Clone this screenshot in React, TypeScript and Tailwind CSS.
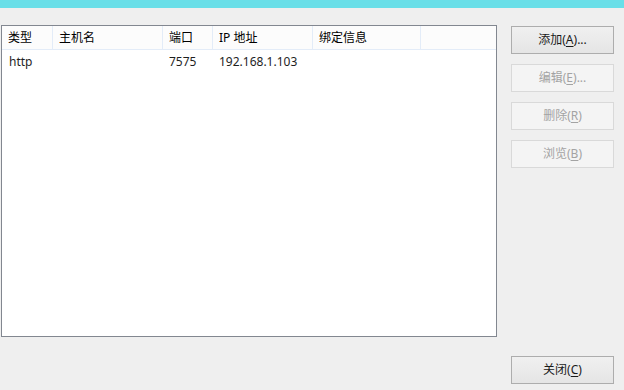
import React from 'react';

type Binding = {
    type: string;
    host: string;
    port: string;
    ip: string;
    info: string;
};

const columns = [
    { title: "类型", width: "w-[51px]" },
    { title: "主机名", width: "w-[110px]" },
    { title: "端口", width: "w-[50px]" },
    { title: "IP 地址", width: "w-[100px]" },
    { title: "绑定信息", width: "w-[108px]" },
];

const bindings: Binding[] = [
    { type: "http", host: "", port: "7575", ip: "192.168.1.103", info: "" },
];

const Button = ({ label, hotkey, suffix = "", disabled = false }: { label: string; hotkey: string; suffix?: string; disabled?: boolean }) => (
    <button
        disabled={disabled}
        className={
            disabled
                ? "w-[103px] h-[28px] border border-[#d9d9d9] bg-[#f4f4f4] text-[#a3a3a3] text-[12px] flex items-center justify-center"
                : "w-[103px] h-[28px] border border-[#adadad] bg-gradient-to-b from-[#f0f0f0] to-[#e5e5e5] text-[#1a1a1a] text-[12px] flex items-center justify-center"
        }
    >
        {label}(<span className="underline underline-offset-2">{hotkey}</span>){suffix}
    </button>
);

const App = () => {
    return (
        <div className="w-[624px] h-[390px] bg-[#efefef] flex flex-col font-['Noto_Sans','Noto_Sans_CJK_SC',sans-serif] text-[12px] text-black overflow-hidden">
            {/* title strip */}
            <div className="h-[8px] bg-[#69dfe8] shrink-0"></div>

            <div className="flex pt-[17px] pl-[1px]">
                {/* list view */}
                <div className="w-[496px] h-[312px] border border-[#828790] bg-white flex flex-col">
                    <div className="flex h-[24px] bg-[#fcfcfc] border-b border-[#e3ecf8]">
                        {columns.map((col, i) => (
                            <div key={i} className={`${col.width} h-full border-r border-[#e3ecf8] pl-[6px] flex items-center`}>
                                {col.title}
                            </div>
                        ))}
                    </div>
                    {bindings.map((b, i) => (
                        <div key={i} className="flex h-[24px] items-center text-[#1e1e1e]">
                            <div className="w-[51px] pl-[7px]">{b.type}</div>
                            <div className="w-[110px] pl-[6px]">{b.host}</div>
                            <div className="w-[50px] pl-[6px]">{b.port}</div>
                            <div className="w-[100px] pl-[6px]">{b.ip}</div>
                            <div className="w-[108px] pl-[6px]">{b.info}</div>
                        </div>
                    ))}
                </div>

                {/* side buttons */}
                <div className="ml-[14px] pt-[1px] flex flex-col gap-[10px]">
                    <Button label="添加" hotkey="A" suffix="..." />
                    <Button label="编辑" hotkey="E" suffix="..." disabled />
                    <Button label="删除" hotkey="R" disabled />
                    <Button label="浏览" hotkey="B" disabled />
                </div>
            </div>

            <div className="flex justify-end pr-[10px] mt-[19px]">
                <Button label="关闭" hotkey="C" />
            </div>
        </div>
    );
};

export default App;
